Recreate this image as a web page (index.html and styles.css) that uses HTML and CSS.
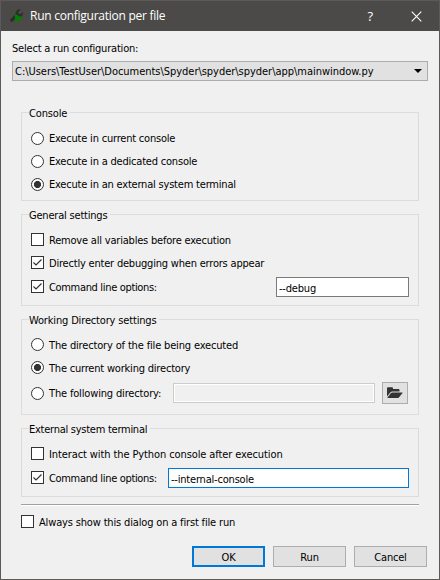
FILE: index.html
```html
<!DOCTYPE html>
<html lang="en">
<head>
<meta charset="utf-8">
<title>Run configuration per file</title>
<link rel="stylesheet" href="styles.css">
</head>
<body>
<div class="dialog">
  <header class="titlebar">
    <svg class="app-icon" width="14" height="15" viewBox="0 0 14 15"><path d="M1.8 11.2 7 6" stroke="#2d2d2d" stroke-width="3.2" stroke-linecap="round"/><path d="M10.8.6A4 4 0 0 0 5.8 5.8L8.3 8A4 4 0 0 0 13 3L10.5 5.2 8.6 4.8 8.3 3Z" fill="#2d2d2d"/><path d="M5 5v8l8.5-4Z" fill="#008000"/></svg>
    <h1 class="title">Run configuration per file</h1>
    <span class="help">?</span>
    <svg class="close" width="11" height="11" viewBox="0 0 11 11"><path d="M.7.7l9.6 9.6M10.3.7.7 10.3" stroke="#fff" stroke-width="1.1"/></svg>
  </header>
  <main class="content">
    <div class="select-label"><span class="tight">Select a run configuration:</span></div>
    <div class="combo"><span class="wide">C:\Users\TestUser\Documents\Spyder\spyder\spyder\app\mainwindow.py</span><svg width="8" height="4" viewBox="0 0 8 4"><path d="M0 0h8L4 4Z"/></svg></div>

    <section class="group console">
      <h2 class="legend snug"><span>Console</span></h2>
      <div class="row"><i class="radio"></i><span class="tight">Execute in current console</span></div>
      <div class="row"><i class="radio"></i><span class="tight">Execute in a dedicated console</span></div>
      <div class="row"><i class="radio on"></i><span class="tight">Execute in an external system terminal</span></div>
    </section>

    <section class="group general">
      <h2 class="legend tight"><span>General settings</span></h2>
      <div class="row"><i class="check"></i><span class="tight">Remove all variables before execution</span></div>
      <div class="row"><i class="check"><svg viewBox="0 0 11 11"><path d="M1.5 5.5 4 8l5.5-5.5"/></svg></i><span class="tight">Directly enter debugging when errors appear</span></div>
      <div class="row field-row"><i class="check"><svg viewBox="0 0 11 11"><path d="M1.5 5.5 4 8l5.5-5.5"/></svg></i><span class="tightest">Command line options:</span><div class="input debug"><span class="tight">--debug</span></div></div>
    </section>

    <section class="group working">
      <h2 class="legend snug"><span>Working Directory settings</span></h2>
      <div class="row"><i class="radio"></i><span class="snug">The directory of the file being executed</span></div>
      <div class="row"><i class="radio on"></i><span class="tight">The current working directory</span></div>
      <div class="row browse-row"><i class="radio"></i><span class="snug">The following directory:</span><div class="input disabled"></div>
        <div class="browse"><svg width="16" height="12" viewBox="0 0 16 12"><path d="M0 9.5V1.3Q0 .3 1 .3h4Q6 .3 6 1.3V2h5.5q1 0 1 1v1.5H5.2q-1 0-1.7.8Z"/><path d="M5.3 5.4h10q.6 0 .2.6l-3.6 4.4q-.6.7-1.4.7H.7q-.6 0-.2-.6L4 6.1q.5-.7 1.3-.7Z"/></svg></div></div>
    </section>

    <section class="group external">
      <h2 class="legend tighter"><span>External system terminal</span></h2>
      <div class="row"><i class="check"></i><span>Interact with the Python console after execution</span></div>
      <div class="row field-row"><i class="check"><svg viewBox="0 0 11 11"><path d="M1.5 5.5 4 8l5.5-5.5"/></svg></i><span class="tightest">Command line options:</span><div class="input focused"><span class="tight">--internal-console</span></div></div>
    </section>

    <div class="separator"></div>
    <div class="row always"><i class="check"></i><span class="snug">Always show this dialog on a first file run</span></div>
    <footer class="buttons">
      <div class="button default"><span>OK</span></div>
      <div class="button"><span>Run</span></div>
      <div class="button"><span class="tight">Cancel</span></div>
    </footer>
  </main>
</div>
</body>
</html>
```
FILE: styles.css
```css
* { box-sizing: border-box; }
body { margin: 0; background: #f0f0f0; color: #000; font: 11px/14px "DejaVu Sans Condensed", "DejaVu Sans", sans-serif; font-stretch: condensed; letter-spacing: -0.1px; white-space: nowrap; }
svg { display: block; flex: none; }
.wide { letter-spacing: -0.03px; }
.snug { letter-spacing: -0.16px; }
.tight { letter-spacing: -0.2px; }
.tighter { letter-spacing: -0.26px; }
.tightest { letter-spacing: -0.33px; }
.dialog { width: 440px; height: 580px; border: 1px solid #5b5a58; background: #f0f0f0; }
.titlebar { display: flex; align-items: center; height: 30px; padding: 0 17px 0 9px; background: #4b4a48; color: #fff; }
.app-icon { margin-right: 6px; }
.title { margin: 0 auto 0 0; font: 12px/16px "Open Sans", "Noto Sans", sans-serif; letter-spacing: -0.26px; }
.help { margin-right: 38px; font: 13px/16px "Open Sans", sans-serif; }
.content { padding: 0 11px; }
.select-label { padding-top: 11px; height: 30px; }
.combo { display: flex; align-items: center; justify-content: space-between; height: 20px; padding: 0 5px 0 2px; border: 1px solid #adadad; background: #e1e1e1; }
.combo span { padding-top: 2px; }
.group { margin: 0 9px 13px; padding: 13px 9px 0; border: 1px solid #dcdcdc; }
.console { height: 89px; margin-top: 31px; padding-top: 14px; }
.general { height: 92px; }
.working { height: 96px; }
.external { height: 69px; margin-bottom: 7px; }
.legend { width: max-content; height: 14px; margin: -19px 0 5px -2px; padding: 0 3px 0 0; background: #f0f0f0; font: inherit; }
.console .legend { margin: -20px 0 6px -2px; }
.row { display: flex; align-items: center; height: 23px; }
.row > span { padding-top: 2px; }
.console .row > span { padding-top: 0; }
.field-row { height: 26px; }
.field-row > span { padding-top: 1px; }
.browse-row { height: 28px; }
.radio, .check { flex: none; width: 13px; height: 13px; margin-right: 5px; border: 1px solid #333; background: #fff; }
.radio { border-radius: 50%; }
.on { background: radial-gradient(circle, #333 3.2px, #fff 3.9px); }
.check path { fill: none; stroke: #333; stroke-width: 1.2; }
.field-row .check { margin-bottom: 1px; }
.browse-row .radio { margin-top: 1px; }
.input { flex: none; height: 20px; margin-left: auto; padding: 3px 2px 0; border: 1px solid #7a7a7a; background: #fff; }
.general .input { padding-top: 4px; }
.debug { width: 133px; }
.focused { width: 241px; padding-top: 4px; border-color: #0078d7; }
.disabled { width: 202px; border-color: #ccc; background: #f0f0f0; box-shadow: inset 0 0 0 1px #fff; }
.browse { display: flex; flex: none; align-items: center; justify-content: center; width: 26px; height: 22px; margin: 0 1px 0 7px; border: 1px solid #adadad; background: #e1e1e1; fill: #333; }
.separator { height: 2px; margin: 0 9px; border-top: 1px solid #a0a0a0; border-bottom: 1px solid #fff; }
.always { height: 31px; margin-left: 9px; }
.buttons { display: flex; justify-content: flex-end; gap: 8px; margin-top: 9px; padding-right: 1px; }
.button { width: 73px; height: 21px; border: 1px solid #adadad; background: #e1e1e1; line-height: 21px; text-align: center; }
.default { border: 2px solid #0078d7; line-height: 19px; }
```
